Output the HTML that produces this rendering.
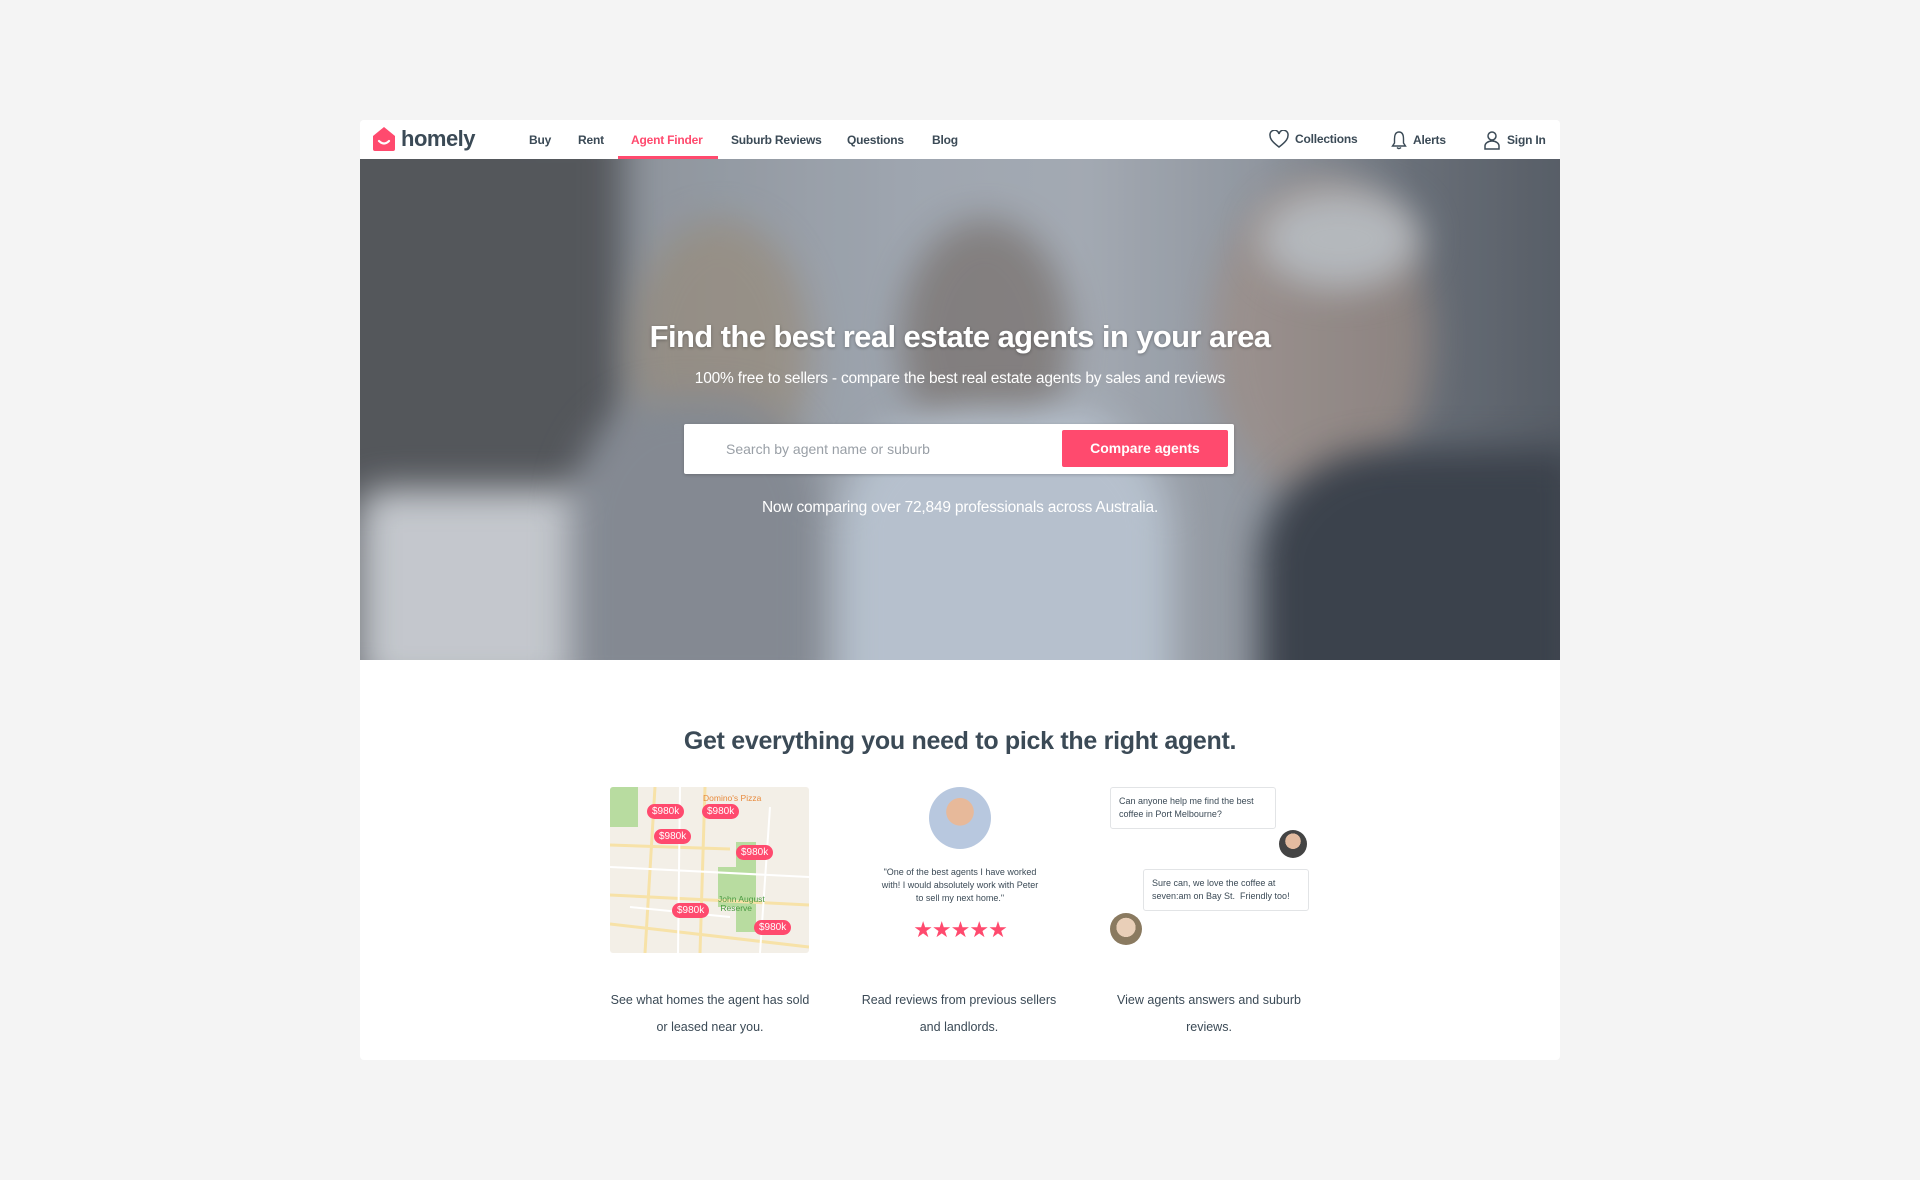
<!DOCTYPE html>
<html><head><meta charset="utf-8"><style>
*{box-sizing:border-box;margin:0;padding:0}
body{width:1920px;height:1180px;background:#f4f4f4;font-family:"Liberation Sans",sans-serif;color:#3b4a56;position:relative;overflow:hidden}
.card{position:absolute;left:360px;top:120px;width:1200px;height:940px;background:#fff;border-radius:4px;overflow:hidden}
.hdr{position:absolute;left:0;top:0;width:1200px;height:39px;background:#fff}
.logo{position:absolute;left:12px;top:6px;display:flex;align-items:center;gap:5px;font-weight:bold;font-size:22px;color:#3b4a56;letter-spacing:-0.5px}
.nav a{position:absolute;top:13px;font-size:12px;font-weight:bold;color:#3b4a56;text-decoration:none;letter-spacing:-0.2px}
.nav a.on{color:#ff4a6e}
.ul{position:absolute;left:258px;top:36px;width:100px;height:3px;background:#ff4a6e}
.r{position:absolute;top:10px;display:flex;align-items:center;gap:6px;font-size:12px;font-weight:bold;letter-spacing:-0.2px}
.hero{position:absolute;left:0;top:39px;width:1200px;height:501px;overflow:hidden;
background:linear-gradient(90deg,#6a6d71 0%,#74777b 12%,#9aa0a7 25%,#aab1ba 45%,#b0b6be 60%,#9aa0a8 75%,#6d737b 88%,#5a6068 100%)}
.hero .b{position:absolute;border-radius:50%;filter:blur(18px)}
.ov{position:absolute;inset:0;background:rgba(70,80,95,0.12)}
h1{position:absolute;left:0;width:1200px;top:160px;text-align:center;color:#fff;font-size:31px;font-weight:bold;letter-spacing:-0.6px;text-shadow:0 1px 3px rgba(0,0,0,.3)}
.sub{position:absolute;left:0;width:1200px;top:211px;text-align:center;color:#fff;font-size:15.5px;letter-spacing:-0.2px}
.sb{position:absolute;left:324px;top:265px;width:550px;height:50px;background:#fff;border-radius:2px;box-shadow:0 1px 3px rgba(0,0,0,.2)}
.sb span{position:absolute;left:42px;top:17px;color:#999fa6;font-size:14px}
.btn{position:absolute;left:378px;top:6px;width:166px;height:37px;background:#ff4a6e;border-radius:2px;color:#fff;font-weight:bold;font-size:14px;text-align:center;line-height:37px}
.cnt{position:absolute;left:0;width:1200px;top:340px;text-align:center;color:#fff;font-size:15.5px;letter-spacing:-0.2px}
h2{position:absolute;left:0;width:1200px;top:607px;text-align:center;font-size:25px;font-weight:bold;color:#3b4a56;letter-spacing:-0.3px}
.map{position:absolute;left:250px;top:667px;width:199px;height:166px;background:#f3efe7;border-radius:3px;overflow:hidden}
.pin{position:absolute;background:#ff4a6e;color:#fff;font-size:10px;padding:2px 5px;border-radius:9px}
.cap{position:absolute;top:867px;width:200px;text-align:center;font-size:12.5px;line-height:27px;color:#3b4a56}
.q{position:absolute;left:519px;top:746px;width:162px;text-align:center;font-size:9px;line-height:13px;color:#3b4a56}
.bub{position:absolute;background:#fff;border:1px solid #e2e4e6;border-radius:3px;font-size:9px;line-height:13px;padding:7px 8px;color:#3b4a56}
.av{position:absolute;border-radius:50%}
</style></head><body>
<div class="card">
 <div class="hdr">
  <div class="logo"><svg width="24" height="26" viewBox="0 0 24 26"><path d="M12 1 L23 10 V23 a2 2 0 0 1-2 2 H3 a2 2 0 0 1-2-2 V10Z" fill="#ff4a6e"/><path d="M7 15 q5 5 10 0" stroke="#fff" stroke-width="2.2" fill="none" stroke-linecap="round"/></svg>homely</div>
  <div class="nav"><a style="left:169px">Buy</a><a style="left:218px">Rent</a><a class="on" style="left:271px">Agent Finder</a><a style="left:371px">Suburb Reviews</a><a style="left:487px">Questions</a><a style="left:572px">Blog</a></div>
  <div class="ul"></div>
  <div class="r" style="left:909px"><svg width="20" height="18" viewBox="0 0 20 18"><path d="M10 17 C2 11 1 8 1 5.5 A4.5 4.5 0 0 1 10 4 A4.5 4.5 0 0 1 19 5.5 C19 8 18 11 10 17Z" fill="none" stroke="#3b4a56" stroke-width="1.5"/></svg>Collections</div>
  <div class="r" style="left:1031px"><svg width="16" height="20" viewBox="0 0 16 20"><path d="M8 2 C4 2 3.5 6 3.5 9 V13 L1.5 16 H14.5 L12.5 13 V9 C12.5 6 12 2 8 2Z M6 17.5 q2 2 4 0" fill="none" stroke="#3b4a56" stroke-width="1.4"/></svg>Alerts</div>
  <div class="r" style="left:1123px"><svg width="18" height="20" viewBox="0 0 18 20"><circle cx="9" cy="6" r="4" fill="none" stroke="#3b4a56" stroke-width="1.5"/><path d="M2 19 V16 a7 5 0 0 1 14 0 V19Z" fill="none" stroke="#3b4a56" stroke-width="1.5"/></svg>Sign In</div>
 </div>
 <div class="hero">
  <div class="b" style="left:-60px;top:-40px;width:320px;height:400px;background:#56585b;border-radius:0"></div>
  <div class="b" style="left:0;top:330px;width:300px;height:200px;background:#d5d8dc;border-radius:20px"></div>
  <div class="b" style="left:270px;top:60px;width:180px;height:260px;background:#a39178;opacity:.6"></div>
  <div class="b" style="left:210px;top:240px;width:250px;height:300px;background:#8c9199;border-radius:40% 40% 0 0"></div>
  <div class="b" style="left:540px;top:60px;width:170px;height:240px;background:#7d736c;opacity:.7"></div>
  <div class="b" style="left:480px;top:250px;width:330px;height:300px;background:#c5d0dc;border-radius:40% 40% 0 0"></div>
  <div class="b" style="left:850px;top:20px;width:220px;height:320px;background:#a8958a;opacity:.7"></div>
  <div class="b" style="left:900px;top:30px;width:160px;height:100px;background:#c3c6c9"></div>
  <div class="b" style="left:900px;top:290px;width:320px;height:280px;background:#3a4049;border-radius:40% 0 0 0"></div>
  <div class="ov"></div>
  <h1>Find the best real estate agents in your area</h1>
  <div class="sub">100% free to sellers - compare the best real estate agents by sales and reviews</div>
  <div class="sb"><span>Search by agent name or suburb</span><div class="btn">Compare agents</div></div>
  <div class="cnt">Now comparing over 72,849 professionals across Australia.</div>
 </div>
 <h2>Get everything you need to pick the right agent.</h2>
 <div class="map">
  <svg width="199" height="166" style="position:absolute;left:0;top:0"><rect x="0" y="0" width="28" height="40" fill="#b8dca0"/><rect x="126" y="55" width="20" height="90" fill="#b8dca0"/><rect x="108" y="80" width="30" height="40" fill="#b8dca0"/><path d="M0 137 L199 160 M0 108 L199 118 M45 0 L35 166 M95 0 L90 166 M0 58 L120 62" stroke="#f7e2a8" stroke-width="3" fill="none"/><path d="M0 80 L199 90 M70 0 L68 166 M160 20 L150 166 M20 120 L120 130" stroke="#fff" stroke-width="2" fill="none"/></svg>
  <div class="pin" style="left:37px;top:17px">$980k</div><div class="pin" style="left:92px;top:17px">$980k</div>
  <div class="pin" style="left:44px;top:42px">$980k</div><div class="pin" style="left:126px;top:58px">$980k</div>
  <div class="pin" style="left:62px;top:116px">$980k</div><div class="pin" style="left:144px;top:133px">$980k</div>
  <div style="position:absolute;left:93px;top:6px;font-size:8.5px;color:#e88a3c">Domino's Pizza</div>
  <div style="position:absolute;left:108px;top:108px;font-size:8.5px;color:#4a9a40;line-height:9px">John August<br>&nbsp;Reserve</div>
 </div>
 <div class="av" style="left:569px;top:667px;width:62px;height:62px;background:radial-gradient(circle at 50% 40%,#e7b99a 0 28%,#b8c8df 29% 100%)"></div>
 <div class="q">"One of the best agents I have worked with! I would absolutely work with Peter to sell my next home."</div>
 <div style="position:absolute;left:540px;top:797px;width:120px;text-align:center;color:#ff4a6e;font-size:22px;letter-spacing:-1px">★★★★★</div>
 <div class="bub" style="left:750px;top:667px;width:166px">Can anyone help me find the best coffee in Port Melbourne?</div>
 <div class="av" style="left:919px;top:710px;width:28px;height:28px;background:radial-gradient(circle at 50% 40%,#e3bba0 0 35%,#444 36%)"></div>
 <div class="bub" style="left:783px;top:749px;width:166px">Sure can, we love the coffee at seven:am on Bay St.&nbsp; Friendly too!</div>
 <div class="av" style="left:750px;top:793px;width:32px;height:32px;background:radial-gradient(circle at 50% 45%,#e9cfb8 0 40%,#8a7a60 41%)"></div>
 <div class="cap" style="left:250px">See what homes the agent has sold or leased near you.</div>
 <div class="cap" style="left:499px">Read reviews from previous sellers and landlords.</div>
 <div class="cap" style="left:749px">View agents answers and suburb reviews.</div>
</div>
</body></html>
